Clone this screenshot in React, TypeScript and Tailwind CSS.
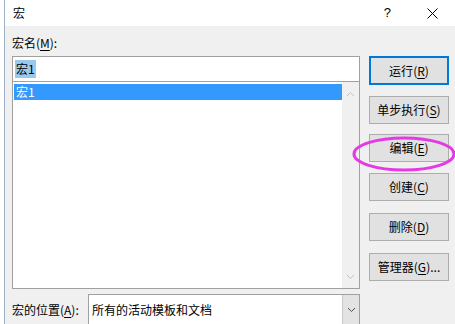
import React from "react";

const font = { fontFamily: '"Noto Sans CJK SC", "Noto Sans", sans-serif' };

const Key = ({ k }: { k: string }) => <span className="underline underline-offset-2">{k}</span>;

const Btn = ({ label, k, tail = "", focused = false, mt }: { label: string; k: string; tail?: string; focused?: boolean; mt: string }) => (
  <button
    className={`${mt} w-[80px] flex items-center justify-center bg-[#e1e1e1] text-[12px] text-black ${
      focused ? "h-[29px] border-2 border-[#0078d7]" : "h-[28px] border border-[#adadad]"
    }`}
  >
    {label}(<Key k={k} />){tail}
  </button>
);

const Chevron = ({ up = false, color }: { up?: boolean; color: string }) => (
  <svg width="9" height="6" viewBox="0 0 9 6">
    <path d={up ? "M1 5 L4.5 1.5 L8 5" : "M1 1 L4.5 4.5 L8 1"} fill="none" stroke={color} strokeWidth="1" />
  </svg>
);

export default function App() {
  return (
    <div className="relative w-[455px] h-[324px] overflow-hidden bg-white flex text-black" style={font}>
      <div className="w-[5px] h-full bg-white border-r border-[#9fb0c6]" />
      <div className="flex-1 flex flex-col">
        <div className="h-[30px] bg-white flex items-center text-[12px]">
          <span className="ml-[8px]">宏</span>
          <span className="ml-auto mr-[36px] text-[13px]" style={{ fontFamily: '"Liberation Sans", sans-serif' }}>?</span>
          <svg width="11" height="11" viewBox="0 0 11 11" className="mr-[17px]">
            <path d="M0.5 0.5 L10.5 10.5 M10.5 0.5 L0.5 10.5" stroke="#000" strokeWidth="1" />
          </svg>
        </div>
        <div className="flex-1 bg-[#f0f0f0] flex pl-[7px]">
          <div className="w-[348px] flex flex-col">
            <div className="h-[30px] flex items-end pb-[4px] text-[12px]">
              宏名(<Key k="M" />):
            </div>
            <div className="h-[26px] bg-white border border-[#a0a0a0] flex items-center pl-[2px]">
              <span className="bg-[#99c9ef] text-[12px] px-[1px] leading-[18px]">宏1</span>
            </div>
            <div className="h-[207px] bg-white border border-[#a0a0a0] border-t-0 flex">
              <div className="flex-1 pl-[1px] pt-[2px]">
                <div className="h-[16px] bg-[#3399ff] text-white text-[12px] leading-[16px] pl-[2px]">宏1</div>
              </div>
              <div className="w-[17px] bg-[#f0f0f0] flex flex-col items-center justify-between pt-[9px] pb-[8px]">
                <Chevron up color="#c2c2c2" />
                <Chevron color="#c2c2c2" />
              </div>
            </div>
            <div className="mt-[5px] flex items-start">
              <span className="w-[76px] text-[12px] pt-[7px]">
                宏的位置(<Key k="A" />):
              </span>
              <div className="flex-1 h-[30px] bg-white border border-[#a0a0a0] border-b-0 flex">
                <span className="flex-1 text-[12px] pl-[3px] pt-[6px]">所有的活动模板和文档</span>
                <div className="w-[17px] bg-[#e3e3e3] border-l border-[#c8c8c8] flex justify-center pt-[12px]">
                  <Chevron color="#505050" />
                </div>
              </div>
            </div>
          </div>
          <div className="ml-[9px] flex flex-col">
            <Btn mt="mt-[30px]" label="运行" k="R" focused />
            <Btn mt="mt-[11px]" label="单步执行" k="S" />
            <Btn mt="mt-[10px]" label="编辑" k="E" />
            <Btn mt="mt-[11px]" label="创建" k="C" />
            <Btn mt="mt-[12px]" label="删除" k="D" />
            <Btn mt="mt-[12px]" label="管理器" k="G" tail="..." />
          </div>
        </div>
      </div>
      <svg className="absolute left-0 top-0 pointer-events-none" width="455" height="324">
        <ellipse cx="404" cy="154" rx="50" ry="16" fill="none" stroke="#e43ae4" strokeWidth="3" />
      </svg>
    </div>
  );
}
